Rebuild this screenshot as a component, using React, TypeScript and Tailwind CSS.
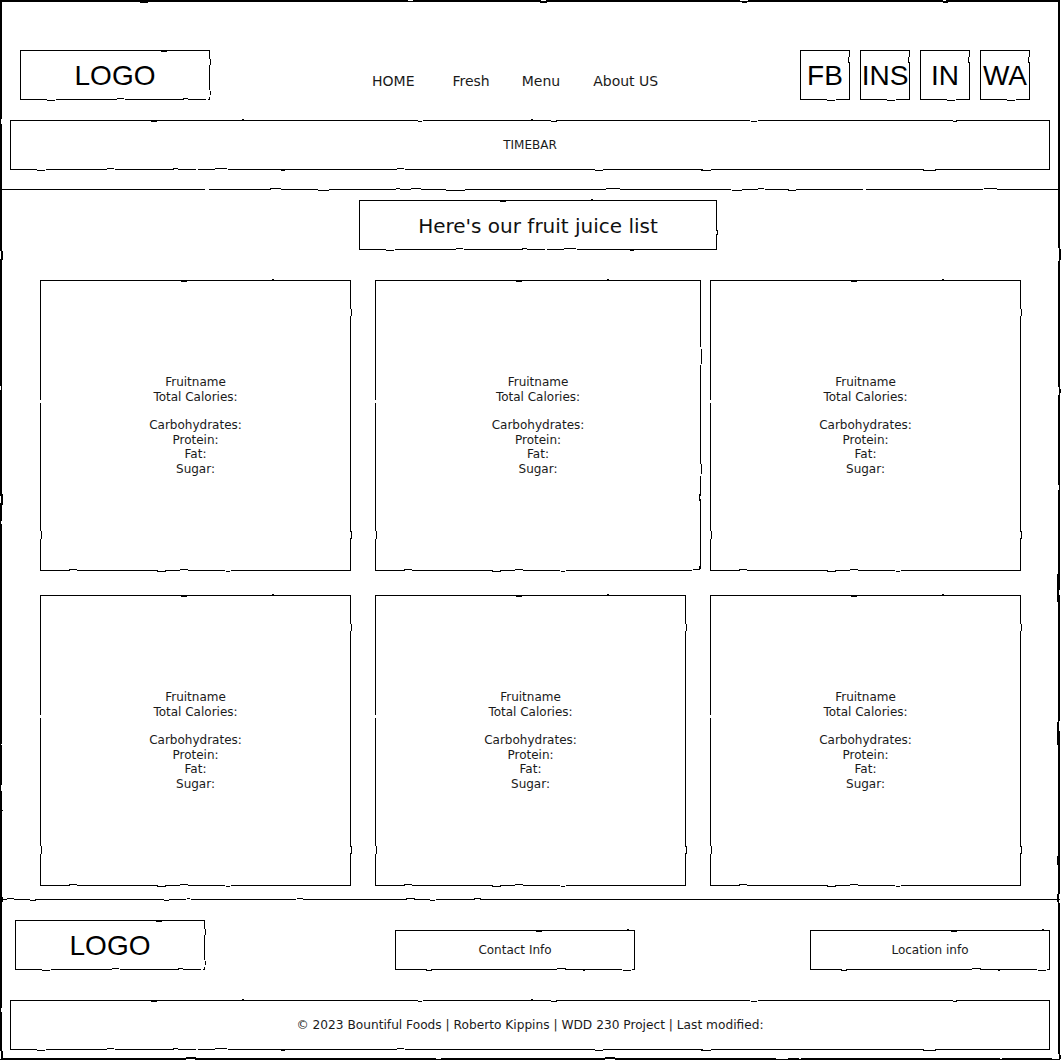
import React from "react";

const sans = "font-['DejaVu_Sans',Verdana,sans-serif]";

// hand drawn outline laid over a box
function Rough({ className = "border" }: { className?: string }) {
  return (
    <span
      className={`pointer-events-none absolute inset-0 border-black [filter:url(#rough)] ${className}`}
    />
  );
}

function FruitCard({ className }: { className: string }) {
  return (
    <div className={`relative flex h-[291px] items-center justify-center ${className}`}>
      <Rough />
      <div className="text-center text-[12px] leading-[14.5px] text-[#1a1a1a]">
        <div>Fruitname</div>
        <div>Total Calories:</div>
        <div className="h-[14px]" />
        <div>Carbohydrates:</div>
        <div>Protein:</div>
        <div>Fat:</div>
        <div>Sugar:</div>
      </div>
    </div>
  );
}

export default function App() {
  const socials = ["FB", "INS", "IN", "WA"];

  return (
    <div className={`bg-white ${sans}`}>
      <svg width="0" height="0" className="absolute">
        <filter id="rough" x="-5%" y="-5%" width="110%" height="110%">
          <feTurbulence type="fractalNoise" baseFrequency="0.045" numOctaves="1" seed="4" />
          <feDisplacementMap in="SourceGraphic" scale="2.5" />
        </filter>
      </svg>

      <div className="relative flex h-[1060px] w-[1060px] flex-col">
        <Rough className="border-2" />

        {/* header */}
        <header className="relative h-[190px] shrink-0">
          <Rough className="border-b" />
          <div className="flex pt-[50px]">
            <div className="relative ml-[20px] flex h-[50px] w-[190px] items-center justify-center">
              <Rough />
              <span className="pt-[2px] font-['Liberation_Sans',Arial,sans-serif] text-[28px] text-black">LOGO</span>
            </div>

            <nav className="ml-[162px] mt-[23px] flex text-[14px] leading-[17px] text-[#1a1a1a]">
              <a>HOME</a>
              <a className="ml-[38px]">Fresh</a>
              <a className="ml-[32px]">Menu</a>
              <a className="ml-[33px]">About US</a>
            </nav>

            <div className="ml-auto mr-[30px] flex gap-[10px]">
              {socials.map((s) => (
                <div key={s} className="relative flex h-[50px] w-[50px] items-center justify-center">
                  <Rough />
                  <span className="pt-[2px] font-['Liberation_Sans',Arial,sans-serif] text-[28px] text-black">{s}</span>
                </div>
              ))}
            </div>
          </div>

          <div className="relative mx-[10px] mt-[20px] flex h-[50px] items-center justify-center text-[12px] text-[#1a1a1a]">
            <Rough />
            TIMEBAR
          </div>
        </header>

        {/* juice list */}
        <main className="relative h-[710px] shrink-0">
          <Rough className="border-b" />
          <div className="relative ml-[359px] mt-[10px] flex h-[50px] w-[358px] items-center justify-center pt-[2px] text-[20px] text-[#111]">
            <Rough />
            Here's our fruit juice list
          </div>

          <div className="ml-[40px] mt-[30px] grid grid-cols-[311px_311px_311px] gap-x-[24px] gap-y-[24px]">
            <FruitCard className="w-[311px]" />
            <FruitCard className="w-[326px]" />
            <FruitCard className="w-[311px]" />
            <FruitCard className="w-[311px]" />
            <FruitCard className="w-[311px]" />
            <FruitCard className="w-[311px]" />
          </div>
        </main>

        {/* footer */}
        <footer className="relative flex-1">
          <div className="flex items-start pt-[20px]">
            <div className="relative ml-[15px] flex h-[50px] w-[190px] items-center justify-center">
              <Rough />
              <span className="pt-[2px] font-['Liberation_Sans',Arial,sans-serif] text-[28px] text-black">LOGO</span>
            </div>
            <div className="relative ml-[190px] mt-[10px] flex h-[40px] w-[240px] items-center justify-center text-[12px] text-[#1a1a1a]">
              <Rough />
              Contact Info
            </div>
            <div className="relative ml-[175px] mt-[10px] flex h-[40px] w-[240px] items-center justify-center text-[12px] text-[#1a1a1a]">
              <Rough />
              Location info
            </div>
          </div>

          <div className="relative mx-[10px] mt-[30px] flex h-[50px] items-center justify-center text-[12.2px] text-[#1a1a1a]">
            <Rough />
            © 2023 Bountiful Foods | Roberto Kippins | WDD 230 Project | Last modified:
          </div>
        </footer>
      </div>
    </div>
  );
}
